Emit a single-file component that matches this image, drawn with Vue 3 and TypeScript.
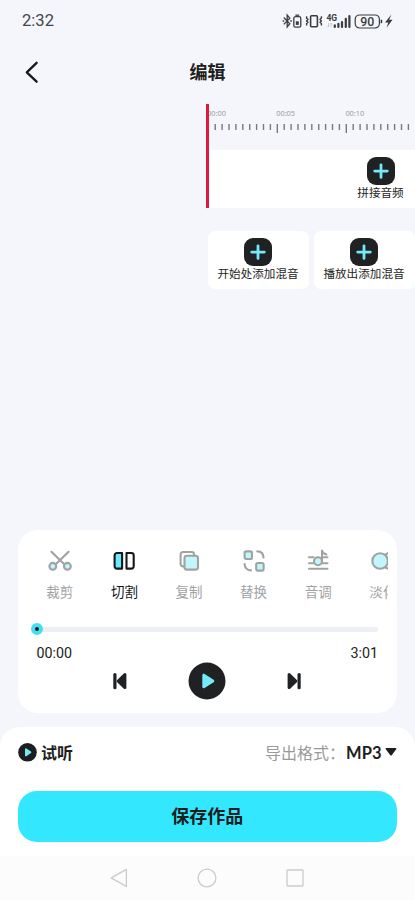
<script setup lang="ts">
interface Tool {
  id: string
  label: string
  active?: boolean
}

const tools: Tool[] = [
  { id: 'trim', label: '裁剪' },
  { id: 'split', label: '切割', active: true },
  { id: 'copy', label: '复制' },
  { id: 'replace', label: '替换' },
  { id: 'pitch', label: '音调' },
  { id: 'fade', label: '淡化' },
]

const mixSlots: string[] = ['开始处添加混音', '播放出添加混音']
const marks: string[] = ['00:00', '00:05', '00:10']
const ticks: number[] = Array.from({ length: 29 }, (_, i) => i + 1)
const tickX = (i: number): number => 1.3 + i * 6.9
</script>

<template>
  <div class="screen">
    <header class="status">
      <span class="clock">2:32</span>
      <svg class="status-icons" width="114" height="18" viewBox="0 0 114 18" fill="none" stroke="#3b3c40">
        <path d="M2.8 5.5l6 6.2-2.6 3.2V3l2.6 3.2-6 6.2" stroke-width="1.3" />
        <path d="M1.6 9h1.6M9.2 9h1.6" stroke-width="1.4" />
        <rect x="12.8" y="4.6" width="7" height="10.6" rx="1.8" stroke-width="1.3" />
        <path d="M14.4 3.2h3.8" stroke-width="1.3" />
        <rect x="14.8" y="9.3" width="3" height="3.6" fill="#3b3c40" stroke="none" />
        <rect x="29.6" y="3.8" width="6.8" height="11" rx="1" stroke-width="1.6" />
        <path d="M25.6 4.2v2l1.3 1.2L25.6 9l1.3 1.3-1.3 1.2v2M40.4 4.2v2l-1.3 1.2L40.4 9l-1.3 1.3 1.3 1.2v2" stroke-width="1.4" />
        <text x="45.4" y="9.4" class="net">4G</text>
        <path d="M47.5 11v4m-1.2-1.2L47.5 15M50 15v-4m1.2 1.2L50 11" stroke="#c4c5c9" stroke-width=".9" />
        <path d="M53.8 15v-1.6M57.4 15v-3.2M61 15v-5M64.8 15V6.8M68.4 15V4.2" stroke-width="2.2" stroke-linecap="round" />
        <rect x="74.2" y="3" width="24.2" height="13" rx="4.4" stroke-width="1.2" />
        <path d="M100.4 7.8v3.4" stroke-width="1.6" />
        <text x="79.2" y="14" class="battery">90</text>
        <path d="M110.4 2.4l-6.4 8h3.2l-1.6 5.4 5.9-8h-3.3z" fill="#3b3c40" stroke="none" />
      </svg>
    </header>

    <nav class="title-bar">
      <button class="back" aria-label="返回">
        <svg width="16" height="24" viewBox="0 0 16 24" fill="none" stroke="#17181b" stroke-width="2.3" stroke-linecap="round" stroke-linejoin="round">
          <path d="M12.6 2.8L2.8 12.3l9.8 9.4" />
        </svg>
      </button>
      <h1>编辑</h1>
      <span class="spacer"></span>
    </nav>

    <main class="timeline">
      <section class="ruler-track">
        <div class="ruler">
          <div class="marks"><span v-for="m in marks" :key="m">{{ m }}</span></div>
          <svg class="ticks" width="210" height="10" viewBox="0 0 210 10" stroke="#77797d" stroke-width="1.4">
            <line v-for="i in ticks" :key="i" :x1="tickX(i)" :x2="tickX(i)" y1="0" :y2="i % 10 === 0 ? 9 : 6" />
          </svg>
        </div>
        <div class="track">
          <div class="add join">
            <svg width="28" height="28" viewBox="0 0 28 28">
              <rect width="28" height="28" rx="9" fill="#202123" />
              <path d="M14 7.8v12.6M7.7 14.1h12.6" stroke="#74e9f8" stroke-width="2.8" stroke-linecap="round" />
            </svg>
            <span>拼接音频</span>
          </div>
        </div>
        <i class="playhead"></i>
      </section>
      <section class="mix">
        <div v-for="slot in mixSlots" :key="slot" class="add slot">
          <svg width="28" height="28" viewBox="0 0 28 28">
            <rect width="28" height="28" rx="9" fill="#202123" />
            <path d="M14 7.8v12.6M7.7 14.1h12.6" stroke="#74e9f8" stroke-width="2.8" stroke-linecap="round" />
          </svg>
          <span>{{ slot }}</span>
        </div>
      </section>
    </main>

    <section class="panel">
      <div class="tools">
        <div v-for="tool in tools" :key="tool.id" class="tool" :class="{ active: tool.active }">
          <svg width="24" height="24" viewBox="0 0 24 24" fill="none" stroke="currentColor" stroke-width="2.1" stroke-linecap="round" stroke-linejoin="round">
            <template v-if="tool.id === 'trim'">
              <path d="M3.4 2.8l13.4 13M20.6 2.8L7.2 15.8" />
              <circle cx="4.8" cy="17.3" r="3.4" class="tint" />
              <circle cx="19.4" cy="17.3" r="3.4" class="tint" />
            </template>
            <template v-else-if="tool.id === 'split'">
              <path d="M10.1 4v15.6H5a2.4 2.4 0 0 1-2.4-2.4V6.4A2.4 2.4 0 0 1 5 4z" class="tint" />
              <path d="M14.5 4v15.6h4.8a2.4 2.4 0 0 0 2.4-2.4V6.4A2.4 2.4 0 0 0 19.3 4z" />
            </template>
            <template v-else-if="tool.id === 'copy'">
              <path d="M7 17.4H6A2.4 2.4 0 0 1 3.6 15V5.4A2.4 2.4 0 0 1 6 3h8.6A2.4 2.4 0 0 1 17 5.4v1" />
              <rect x="7.5" y="6.8" width="13.5" height="13.8" rx="2.4" class="tint" />
            </template>
            <template v-else-if="tool.id === 'replace'">
              <rect x="2.6" y="2.4" width="7.4" height="7.6" rx="1.5" class="tint" />
              <rect x="14.2" y="14" width="7.4" height="7.6" rx="1.5" class="tint" />
              <path d="M15.3 2.4c3.7 0 6 2.4 6.2 6M2.6 15c.2 3.6 2.4 6.2 6.3 6.4" />
            </template>
            <template v-else-if="tool.id === 'pitch'">
              <path d="M3 8.3h4.6M3 14.2h4M17.8 8.3h3.6M16.4 14.2h5M3 19.7h18.4M16 12V1.6c.4 2 1.9 3.2 4.4 3.8" />
              <circle cx="12" cy="12.2" r="4" class="tint" />
            </template>
            <template v-else>
              <path d="M14 5.5c2-.2 3-2 6-2M14 18.4c2 .2 3 2 6 2" />
              <circle cx="9.1" cy="12" r="7.8" class="tint" />
            </template>
          </svg>
          <span>{{ tool.label }}</span>
        </div>
      </div>

      <div class="progress"><i></i></div>
      <div class="times"><span>00:00</span><span>3:01</span></div>

      <div class="controls">
        <svg width="16" height="18" viewBox="0 0 16 18" fill="#202123" stroke="#202123" stroke-linecap="round" stroke-linejoin="round">
          <path d="M2.9 2.5v13.2" stroke-width="3.2" />
          <path d="M12.9 2.6v13L6.2 9.1z" stroke-width="3" />
        </svg>
        <svg width="38" height="38" viewBox="0 0 38 38">
          <circle cx="19" cy="19" r="18.5" fill="#202123" />
          <path d="M15.8 13.2v11.6l9-5.8z" fill="#74e9f8" stroke="#74e9f8" stroke-width="3" stroke-linejoin="round" />
        </svg>
        <svg width="16" height="18" viewBox="0 0 16 18" fill="#202123" stroke="#202123" stroke-linecap="round" stroke-linejoin="round">
          <path d="M13.1 2.5v13.2" stroke-width="3.2" />
          <path d="M3.1 2.6v13l6.7-6.5z" stroke-width="3" />
        </svg>
      </div>
    </section>

    <footer class="export">
      <div class="options">
        <svg width="19" height="19" viewBox="0 0 19 19">
          <circle cx="9.5" cy="9.3" r="9.3" fill="#1d1e20" />
          <path d="M7.9 6.2v6.2l4.5-3.1z" fill="#74e9f8" stroke="#74e9f8" stroke-width="1.8" stroke-linejoin="round" />
        </svg>
        <b class="preview">试听</b>
        <span class="format">导出格式：</span>
        <b class="value">MP3</b>
        <svg width="12" height="10" viewBox="0 0 12 10"><path d="M1.5 1.8h9L6 7.6z" fill="#1d1e20" stroke="#1d1e20" stroke-width="1.8" stroke-linejoin="round" /></svg>
      </div>
      <button class="save">保存作品</button>
    </footer>

    <div class="system-nav">
      <svg width="20" height="20" viewBox="0 0 20 20"><path d="M17.4 1.4v17L2.2 9.9z" /></svg>
      <svg width="20" height="20" viewBox="0 0 20 20"><circle cx="10" cy="10" r="8.9" /></svg>
      <svg width="20" height="20" viewBox="0 0 20 20"><rect x="2" y="2" width="16" height="16" rx=".8" /></svg>
    </div>
  </div>
</template>

<style>
body {
  margin: 0;
  background: #f5f6fb;
}
</style>

<style scoped>
.screen {
  width: 415px;
  height: 900px;
  display: flex;
  flex-direction: column;
  overflow: hidden;
  background: #f5f6fb;
  color: #1d1e20;
  font-family: Roboto, "Noto Sans CJK SC", sans-serif;
}
button {
  border: 0;
  padding: 0;
  background: none;
  color: inherit;
  font-family: inherit;
}
svg {
  display: block;
  flex: none;
}
.status {
  height: 42px;
  flex: none;
  box-sizing: border-box;
  padding: 0 20px 0 22px;
  display: flex;
  align-items: center;
  justify-content: space-between;
}
.clock {
  font-size: 16.6px;
  line-height: 20px;
  color: #444549;
}
.net {
  font: 700 8.5px Roboto, sans-serif;
  fill: #3b3c40;
  stroke: none;
}
.battery {
  font: 500 12.4px Roboto, sans-serif;
  fill: #3b3c40;
  stroke: none;
}
.title-bar {
  height: 60px;
  flex: none;
  display: grid;
  grid-template-columns: 60px 1fr 60px;
  align-items: center;
}
.back {
  margin-left: 24px;
  width: 16px;
}
h1 {
  margin: 2px 0 0;
  font-size: 18px;
  line-height: 26px;
  font-weight: 700;
  text-align: center;
}
.timeline {
  flex: none;
  height: 428px;
  padding-left: 207px;
}
.ruler-track {
  position: relative;
  height: 106px;
}
.ruler {
  height: 48px;
  overflow: hidden;
}
.marks {
  display: flex;
  padding-top: 6px;
  height: 10px;
  font: 7.4px/10px "Noto Sans", sans-serif;
  color: #9b9c9f;
}
.marks span {
  width: 69.2px;
  flex: none;
}
.ticks {
  margin-top: 6px;
}
.track {
  height: 58px;
  margin-left: 1px;
  background: #fff;
  border-radius: 4px 0 0 4px;
  display: flex;
  justify-content: flex-end;
}
.playhead {
  position: absolute;
  left: -1px;
  top: 2px;
  width: 3px;
  height: 104px;
  background: #dc1b3e;
}
.add {
  display: flex;
  flex-direction: column;
  align-items: center;
  padding-top: 6.5px;
  box-sizing: border-box;
  font-size: 11.6px;
  line-height: 17px;
  white-space: nowrap;
}
.join {
  width: 69px;
}
.mix {
  margin-top: 23px;
  display: flex;
  gap: 4.5px;
}
.slot {
  flex: none;
  width: 101px;
  height: 57.5px;
  margin-left: .5px;
  background: #fff;
  border-radius: 7px;
}
.panel {
  flex: none;
  width: 378.5px;
  height: 183px;
  margin-left: 18px;
  box-sizing: border-box;
  background: #fff;
  border-radius: 20px;
}
.tools {
  display: flex;
  height: 97px;
  box-sizing: border-box;
  margin: 0 9px 0 9.5px;
  padding-top: 19px;
  overflow: hidden;
}
.tool {
  flex: none;
  width: 64.6px;
  display: flex;
  flex-direction: column;
  align-items: center;
  gap: 8.5px;
  color: #a1a2a3;
  font-size: 13.5px;
  line-height: 20px;
}
.tint {
  fill: #c2f6fd;
}
.active {
  color: #161719;
}
.active .tint {
  fill: #6aeafb;
}
.progress {
  height: 4.5px;
  margin: 0 18.5px;
  border-radius: 3px;
  background: #edeff7;
  display: flex;
  align-items: center;
}
.progress i {
  width: 4px;
  height: 4px;
  margin-left: -6px;
  border: 4px solid #42dfef;
  border-radius: 50%;
  background: #202123;
}
.times {
  display: flex;
  justify-content: space-between;
  margin: 12.5px 18.5px 0;
  font-size: 14.3px;
  line-height: 18px;
}
.controls {
  display: flex;
  align-items: center;
  justify-content: center;
  gap: 60px;
  height: 38px;
}
.export {
  margin-top: 14px;
  flex: none;
  height: 128.5px;
  box-sizing: border-box;
  padding: 14px 18.5px 0 18px;
  border-radius: 20px 20px 0 0;
  background: #fff;
}
.options {
  display: flex;
  align-items: center;
  height: 22px;
}
.preview {
  margin-left: 4px;
  font-size: 16px;
}
.format {
  margin-left: auto;
  font-size: 16px;
  color: #999a9c;
}
.value {
  font: 700 16.5px Lato, sans-serif;
  margin: 2px 3px 0 1px;
}
.save {
  display: block;
  width: 100%;
  height: 51px;
  margin-top: 28px;
  padding-bottom: 3px;
  border-radius: 19px;
  background: #33e7ff;
  font-size: 18px;
  font-weight: 700;
}
.system-nav {
  flex: 1;
  padding-right: 1px;
  display: flex;
  align-items: center;
  justify-content: center;
  gap: 68px;
  background: #fcfcfc;
}
.system-nav svg {
  fill: none;
  stroke: #cbcbcb;
  stroke-width: 1.3;
  stroke-linejoin: round;
}
</style>
